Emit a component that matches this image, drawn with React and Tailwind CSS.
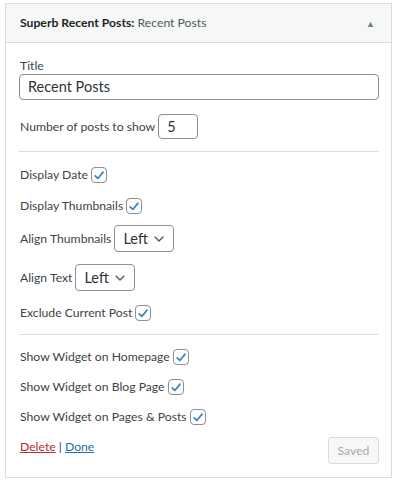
import { ChevronDown } from "lucide-react";

const Check = () => (
  <span className="inline-flex h-4 w-4 items-center justify-center rounded-[4px] border border-[#8c8f94] bg-white">
    <svg viewBox="0 0 20 20" className="h-[15px] w-[15px]">
      <path d="M4.5 10.5 L8.3 14.2 L15.8 5.2" fill="none" stroke="#3582c4" strokeWidth="2.4" strokeLinecap="round" strokeLinejoin="round" />
    </svg>
  </span>
);

const CheckRow = ({ label }) => (
  <div className="flex h-[20px] items-center gap-[3px]">
    <span>{label}</span>
    <Check />
  </div>
);

const Select = ({ value }) => (
  <div className="flex h-[27px] w-[60px] items-center justify-between rounded-[4px] border border-[#8c8f94] bg-white pl-[8px] pr-[6px] text-[14.5px] text-[#2c3338]">
    <span>{value}</span>
    <ChevronDown className="h-4 w-4 text-[#50575e]" strokeWidth={2} />
  </div>
);

export default function App() {
  return (
    <div className="bg-white px-[5px] pt-[3px] pb-[4px] font-['Lato',sans-serif] text-[12.2px] leading-[20px] text-[#3c434a]">
      <div className="border border-[#dcdcde] bg-white">
        <header className="flex h-[39px] items-center justify-between border-b border-[#dcdcde] bg-[#f6f7f7] pl-[14px] pr-[16px]">
          <h3 className="text-[12.2px] text-[#1d2327]">
            <span className="font-bold">Superb Recent Posts:</span>{" "}
            <span className="text-[#50575e]">Recent Posts</span>
          </h3>
          <span className="text-[9px] leading-none text-[#787c82]">▲</span>
        </header>

        <div className="pl-[13px] pr-[12px] pt-[15px] pb-[13px]">
          <label className="block pl-[1px] leading-[16px]">Title</label>
          <div className="flex h-[26px] items-center rounded-[4px] border border-[#8c8f94] px-[8px] text-[14.5px] text-[#2c3338]">
            Recent Posts
          </div>

          <div className="mt-[14px] flex items-center gap-[3px] pl-[1px]">
            <span>Number of posts to show</span>
            <div className="flex h-[25px] w-[40px] items-center rounded-[4px] border border-[#8c8f94] px-[8px] text-[14.5px] text-[#2c3338]">
              5
            </div>
          </div>

          <hr className="mt-[12px] border-t border-[#dcdcde]" />

          <div className="pl-[1px]">
            <div className="mt-[13px] flex flex-col gap-[11px]">
              <CheckRow label="Display Date" />
              <CheckRow label="Display Thumbnails" />
            </div>

            <div className="mt-[9px] flex items-center gap-[3px]">
              <span>Align Thumbnails</span>
              <Select value="Left" />
            </div>

            <div className="mt-[12px] flex items-center gap-[3px]">
              <span>Align Text</span>
              <Select value="Left" />
            </div>

            <div className="mt-[12px]">
              <CheckRow label="Exclude Current Post" />
            </div>
          </div>

          <hr className="mt-[11px] border-t border-[#dcdcde]" />

          <div className="mt-[12px] flex flex-col gap-[10px] pl-[1px]">
            <CheckRow label="Show Widget on Homepage" />
            <CheckRow label="Show Widget on Blog Page" />
            <CheckRow label="Show Widget on Pages & Posts" />
          </div>

          <div className="mt-[10px] flex items-start justify-between pl-[1px]">
            <div>
              <a className="text-[#b32d2e] underline">Delete</a>
              <span> | </span>
              <a className="text-[#2271b1] underline">Done</a>
            </div>
            <button
              disabled
              className="h-[27px] w-[51px] rounded-[3px] border border-[#dcdcde] bg-[#f6f7f7] text-[12.2px] text-[#a7aaad]"
            >
              Saved
            </button>
          </div>
        </div>
      </div>
    </div>
  );
}
